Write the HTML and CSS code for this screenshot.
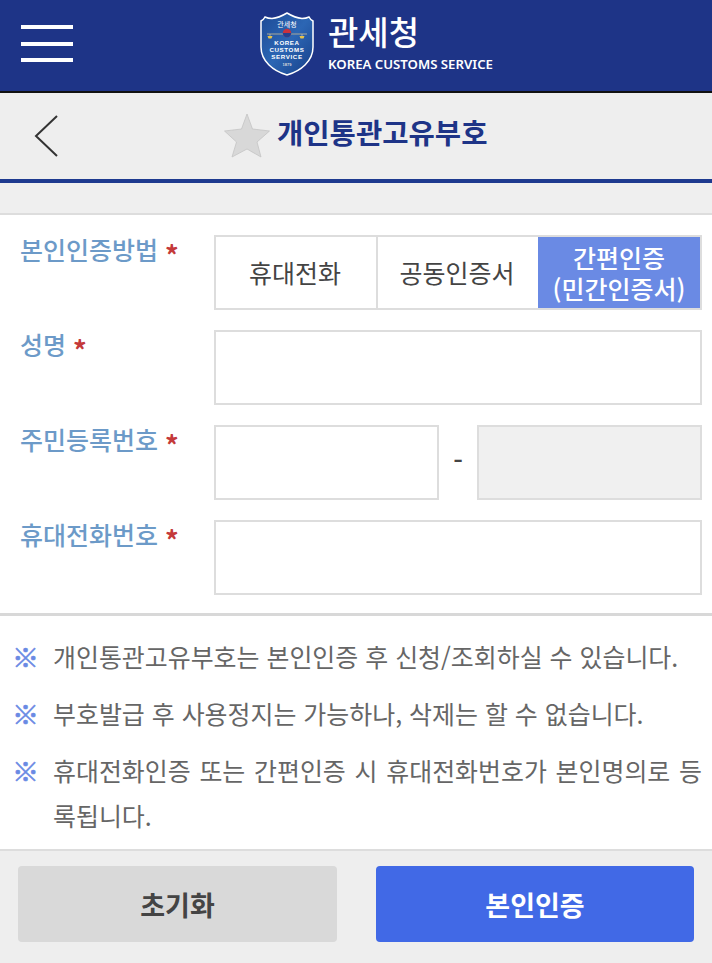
FILE: index.html
```html
<!DOCTYPE html>
<html lang="ko">
<head>
    <title>개인통관고유부호</title>
    <link rel="stylesheet" href="styles.css">
</head>
<body>
    <header class="top-bar">
        <div class="menu-icon"><span></span><span></span><span></span></div>
        <div class="brand">
            <svg class="brand-logo" width="56" height="66" viewBox="0 0 56 66">
                <defs>
                    <linearGradient id="shield-fill" x1="0" y1="0" x2="1" y2="1">
                        <stop offset="0" stop-color="#1d4a96"/>
                        <stop offset="0.5" stop-color="#2c66b4"/>
                        <stop offset="1" stop-color="#163f88"/>
                    </linearGradient>
                </defs>
                <path d="M28 2 C33 5 37 7 43 7.500 C46 7.500 48 7 50 6 C51 8 52 9 54 10 L54 36 C54 50 42 60 28 64 C14 60 2 50 2 36 L2 10 C4 9 5 8 6 6 C8 7 10 7.500 13 7.500 C19 7 23 5 28 2 Z" fill="url(#shield-fill)" stroke="#fff" stroke-width="1.500"/>
                <text x="28" y="16" class="logo-han">관세청</text>
                <path d="M8 23 H48" stroke="#a8a898" stroke-width="1"/>
                <path d="M11 23 V25 M43 23 V25" stroke="#ccc" stroke-width="0.600"/>
                <circle cx="28" cy="22" r="4.200" fill="#c8313c"/>
                <path d="M23.800 22 A4.200 4.200 0 0 0 32.200 22 Z" fill="#23418f"/>
                <path d="M8.500 25 H13.500 L12.500 27.500 H9.500 Z M40.500 25 H45.500 L44.500 27.500 H41.500 Z" fill="#e6c34a"/>
                <text x="28" y="33.500" class="logo-en">KOREA</text>
                <text x="28" y="41" class="logo-en">CUSTOMS</text>
                <text x="28" y="47.500" class="logo-en">SERVICE</text>
                <text x="28" y="55" class="logo-year">1879</text>
            </svg>
            <div class="brand-text">
                <div class="brand-name">관세청</div>
                <div class="brand-sub">KOREA CUSTOMS SERVICE</div>
            </div>
        </div>
    </header>

    <div class="title-bar">
        <svg class="back-icon" width="24" height="44" viewBox="0 0 24 44">
            <path d="M23 2 L2 22 L23 42" fill="none" stroke="#333" stroke-width="2"/>
        </svg>
        <div class="title-wrap">
            <svg class="star-icon" width="46" height="44" viewBox="0 0 46 44">
                <path d="M23 0 L28.500 15 L45.500 17 L33 28 L37 43 L23 35 L8 43 L12.500 28 L0.500 17 L17.500 15 Z" fill="#d8d8d8" stroke="#c4c4c4" stroke-width="0.800"/>
            </svg>
            <h1 class="page-title">개인통관고유부호</h1>
        </div>
    </div>
    <div class="title-spacer"></div>

    <main class="form-area">
        <div class="form-row">
            <div class="form-label">본인인증방법 <em>*</em></div>
            <div class="tabs">
                <div class="tab">휴대전화</div>
                <div class="tab">공동인증서</div>
                <div class="tab active">간편인증<br>(민간인증서)</div>
            </div>
        </div>
        <div class="form-row">
            <div class="form-label">성명 <em>*</em></div>
            <div class="field"></div>
        </div>
        <div class="form-row">
            <div class="form-label">주민등록번호 <em>*</em></div>
            <div class="id-fields">
                <div class="field"></div>
                <div class="dash">-</div>
                <div class="field locked"></div>
            </div>
        </div>
        <div class="form-row">
            <div class="form-label">휴대전화번호 <em>*</em></div>
            <div class="field"></div>
        </div>
    </main>

    <ul class="notes">
        <li>개인통관고유부호는 본인인증 후 신청/조회하실 수 있습니다.</li>
        <li>부호발급 후 사용정지는 가능하나, 삭제는 할 수 없습니다.</li>
        <li>휴대전화인증 또는 간편인증 시 휴대전화번호가 본인명의로 등록됩니다.</li>
    </ul>

    <footer class="actions">
        <button class="btn btn-reset">초기화</button>
        <button class="btn btn-verify">본인인증</button>
    </footer>
</body>
</html>
```

FILE: styles.css
```css
* {
    box-sizing: border-box;
}
body {
    margin: 0;
    font-family: "Noto Sans CJK KR", "Noto Sans", sans-serif;
    background-color: #fff;
}
.top-bar {
    height: 93px;
    background-color: #1e3487;
    border-bottom: 2px solid #111;
    display: flex;
    align-items: center;
    padding-left: 21px;
    padding-bottom: 4px;
}
.menu-icon {
    width: 52px;
    height: 37px;
    display: flex;
    flex-direction: column;
    justify-content: space-between;
}
.menu-icon span {
    height: 4px;
    background-color: #fff;
}
.brand {
    display: flex;
    align-items: center;
    margin-left: 186px;
    gap: 13px;
}
.brand-logo {
    display: block;
}
.logo-han {
    font-size: 7px;
    fill: #fff;
    text-anchor: middle;
}
.logo-en {
    font-family: "Liberation Sans", sans-serif;
    font-size: 6.200px;
    font-weight: 700;
    letter-spacing: 0.6px;
    fill: #fff;
    text-anchor: middle;
}
.logo-year {
    font-family: "Liberation Sans", sans-serif;
    font-size: 4px;
    font-weight: 700;
    fill: #ddd;
    text-anchor: middle;
}
.brand-text {
    color: #fff;
    margin-bottom: 1px;
}
.brand-name {
    font-size: 33px;
    font-weight: 500;
    line-height: 36px;
}
.brand-sub {
    font-family: "Noto Sans", sans-serif;
    font-size: 13.200px;
    font-weight: 600;
    line-height: 18px;
    margin-top: 6px;
}
.title-bar {
    height: 90px;
    background-color: #eee;
    border-bottom: 4px solid #1e3a8f;
    display: flex;
    align-items: center;
    padding-left: 34px;
}
.back-icon {
    display: block;
}
.title-wrap {
    display: flex;
    align-items: center;
    margin-left: 166px;
    gap: 7px;
}
.page-title {
    margin: 0 0 8px;
    font-size: 28.600px;
    font-weight: 700;
    color: #1e3487;
    line-height: 40px;
}
.title-spacer {
    height: 32px;
    background-color: #efefef;
    border-bottom: 2px solid #ddd;
}
.form-area {
    padding: 20px 10px 18px 20px;
    border-bottom: 3px solid #d8d8d8;
    display: flex;
    flex-direction: column;
    gap: 20px;
}
.form-row {
    display: flex;
    height: 75px;
}
.form-label {
    width: 194px;
    font-size: 25px;
    font-weight: 500;
    color: #6c9ac8;
    line-height: 28px;
    flex-shrink: 0;
}
.form-label em {
    color: #c43a3a;
    font-size: 27px;
    line-height: 1;
    font-style: normal;
    font-weight: 700;
    vertical-align: -6px;
}
.field {
    flex: 1;
    border: 2px solid #ddd;
    background-color: #fff;
}
.field.locked {
    background-color: #f0f0f0;
}
.tabs {
    flex: 1;
    display: grid;
    grid-template-columns: 160px 162px 1fr;
    border: 2px solid #ddd;
}
.tab {
    display: flex;
    align-items: center;
    justify-content: center;
    text-align: center;
    font-size: 25px;
    line-height: 31px;
    color: #444;
    border-left: 2px solid #ddd;
    padding-right: 2px;
}
.tab:first-child {
    border-left: none;
}
.tab.active {
    background-color: #6a8ae4;
    color: #fff;
    font-weight: 500;
    border-left: none;
    padding-right: 0;
}
.id-fields {
    flex: 1;
    display: flex;
    align-items: stretch;
}
.id-fields .field {
    flex: none;
    width: 225px;
}
.dash {
    width: 38px;
    text-align: center;
    font-size: 27px;
    font-weight: 500;
    color: #444;
    line-height: 70px;
}
.notes {
    list-style: none;
    margin: 0;
    padding: 18px 10px 11px 53px;
}
.notes li {
    position: relative;
    font-size: 24.950px;
    line-height: 45px;
    color: #666;
    margin-bottom: 12px;
    word-break: break-all;
    text-align: justify;
}
.notes li:last-child {
    margin-bottom: 0;
}
.notes li::before {
    content: "※";
    position: absolute;
    left: -41px;
    top: 0;
    color: #6a8ae4;
    font-size: 27px;
    font-weight: 700;
    -webkit-text-stroke: 0.6px #6a8ae4;
}
.actions {
    height: 114px;
    background-color: #eee;
    border-top: 2px solid #ddd;
    padding: 15px 18px 21px;
    display: flex;
    justify-content: space-between;
}
.btn {
    width: 319px;
    height: 76px;
    border: none;
    border-radius: 4px;
    font-family: inherit;
    font-size: 27px;
    font-weight: 700;
}
.btn-reset {
    background-color: #d9d9d9;
    color: #444;
}
.btn-verify {
    width: 318px;
    background-color: #4169e6;
    color: #fff;
}
```
